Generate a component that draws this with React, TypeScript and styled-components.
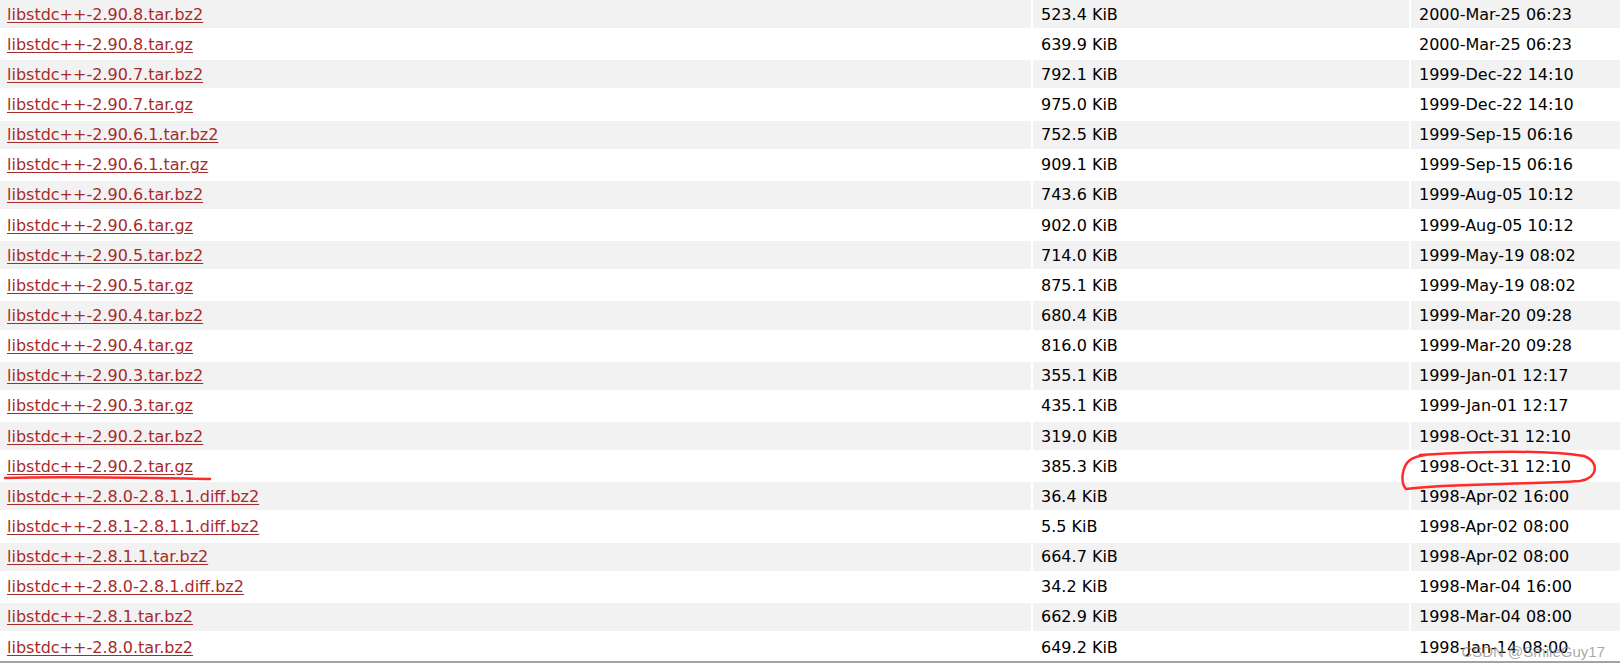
import styled, { createGlobalStyle } from 'styled-components';

type FileRow = {
  name: string;
  size: string;
  date: string;
};

const rows: FileRow[] = [
  { name: 'libstdc++-2.90.8.tar.bz2', size: '523.4 KiB', date: '2000-Mar-25 06:23' },
  { name: 'libstdc++-2.90.8.tar.gz', size: '639.9 KiB', date: '2000-Mar-25 06:23' },
  { name: 'libstdc++-2.90.7.tar.bz2', size: '792.1 KiB', date: '1999-Dec-22 14:10' },
  { name: 'libstdc++-2.90.7.tar.gz', size: '975.0 KiB', date: '1999-Dec-22 14:10' },
  { name: 'libstdc++-2.90.6.1.tar.bz2', size: '752.5 KiB', date: '1999-Sep-15 06:16' },
  { name: 'libstdc++-2.90.6.1.tar.gz', size: '909.1 KiB', date: '1999-Sep-15 06:16' },
  { name: 'libstdc++-2.90.6.tar.bz2', size: '743.6 KiB', date: '1999-Aug-05 10:12' },
  { name: 'libstdc++-2.90.6.tar.gz', size: '902.0 KiB', date: '1999-Aug-05 10:12' },
  { name: 'libstdc++-2.90.5.tar.bz2', size: '714.0 KiB', date: '1999-May-19 08:02' },
  { name: 'libstdc++-2.90.5.tar.gz', size: '875.1 KiB', date: '1999-May-19 08:02' },
  { name: 'libstdc++-2.90.4.tar.bz2', size: '680.4 KiB', date: '1999-Mar-20 09:28' },
  { name: 'libstdc++-2.90.4.tar.gz', size: '816.0 KiB', date: '1999-Mar-20 09:28' },
  { name: 'libstdc++-2.90.3.tar.bz2', size: '355.1 KiB', date: '1999-Jan-01 12:17' },
  { name: 'libstdc++-2.90.3.tar.gz', size: '435.1 KiB', date: '1999-Jan-01 12:17' },
  { name: 'libstdc++-2.90.2.tar.bz2', size: '319.0 KiB', date: '1998-Oct-31 12:10' },
  { name: 'libstdc++-2.90.2.tar.gz', size: '385.3 KiB', date: '1998-Oct-31 12:10' },
  { name: 'libstdc++-2.8.0-2.8.1.1.diff.bz2', size: '36.4 KiB', date: '1998-Apr-02 16:00' },
  { name: 'libstdc++-2.8.1-2.8.1.1.diff.bz2', size: '5.5 KiB', date: '1998-Apr-02 08:00' },
  { name: 'libstdc++-2.8.1.1.tar.bz2', size: '664.7 KiB', date: '1998-Apr-02 08:00' },
  { name: 'libstdc++-2.8.0-2.8.1.diff.bz2', size: '34.2 KiB', date: '1998-Mar-04 16:00' },
  { name: 'libstdc++-2.8.1.tar.bz2', size: '662.9 KiB', date: '1998-Mar-04 08:00' },
  { name: 'libstdc++-2.8.0.tar.bz2', size: '649.2 KiB', date: '1998-Jan-14 08:00' },
];

const GlobalStyle = createGlobalStyle`
  html, body {
    margin: 0;
    padding: 0;
    background: #ffffff;
    width: 1620px;
    height: 672px;
    overflow: hidden;
  }
  body {
    font-family: 'DejaVu Sans', Verdana, sans-serif;
    font-size: 16px;
    color: #000000;
  }
`;

const Page = styled.div`
  position: relative;
  width: 1620px;
`;

const Listing = styled.div`
  display: grid;
  grid-template-columns: 1031px 376px 1fr;
  column-gap: 2px;
  row-gap: 2px;
  border-bottom: 2px solid #a3a3a3;
`;

const Cell = styled.div<{ $shaded: boolean }>`
  height: 28.15px;
  display: flex;
  align-items: center;
  padding: 0 8px;
  background: ${(p) => (p.$shaded ? '#f2f2f2' : '#ffffff')};
  white-space: nowrap;
`;

const NameCell = styled(Cell)`
  padding-left: 7px;
`;

const FileLink = styled.a`
  color: #a62b2b;
  text-decoration: underline;
  text-underline-offset: 2px;
`;

// red pen marks drawn over the listing
const Annotation = styled.svg`
  position: absolute;
  left: 0;
  top: 0;
  pointer-events: none;
`;

const Watermark = styled.div`
  position: absolute;
  right: 15px;
  top: 643px;
  font-family: 'Liberation Sans', Arial, sans-serif;
  font-size: 15px;
  color: rgba(140, 140, 140, 0.75);
`;

const App = () => {
  return (
    <>
      <GlobalStyle />
      <Page>
        <Listing>
          {rows.map((r, i) => {
            const shaded = i % 2 === 0;
            return [
              <NameCell key={`n${i}`} $shaded={shaded}>
                <FileLink href='#'>{r.name}</FileLink>
              </NameCell>,
              <Cell key={`s${i}`} $shaded={shaded}>
                {r.size}
              </Cell>,
              <Cell key={`d${i}`} $shaded={shaded}>
                {r.date}
              </Cell>,
            ];
          })}
        </Listing>
        <Annotation width='1620' height='672' viewBox='0 0 1620 672'>
          <path
            d='M5 478 C 60 476, 150 478, 210 479'
            stroke='#ff2a2a'
            strokeWidth='2.5'
            fill='none'
            strokeLinecap='round'
          />
          <path
            d='M1420 455 C 1470 452, 1540 449, 1584 456 C 1600 462, 1598 478, 1580 481 C 1520 485, 1450 483, 1406 489 C 1400 482, 1402 466, 1410 460 C 1414 457, 1418 456, 1426 455'
            stroke='#ff2a2a'
            strokeWidth='2.5'
            fill='none'
            strokeLinecap='round'
          />
        </Annotation>
        <Watermark>CSDN @SmileGuy17</Watermark>
      </Page>
    </>
  );
};

export default App;
